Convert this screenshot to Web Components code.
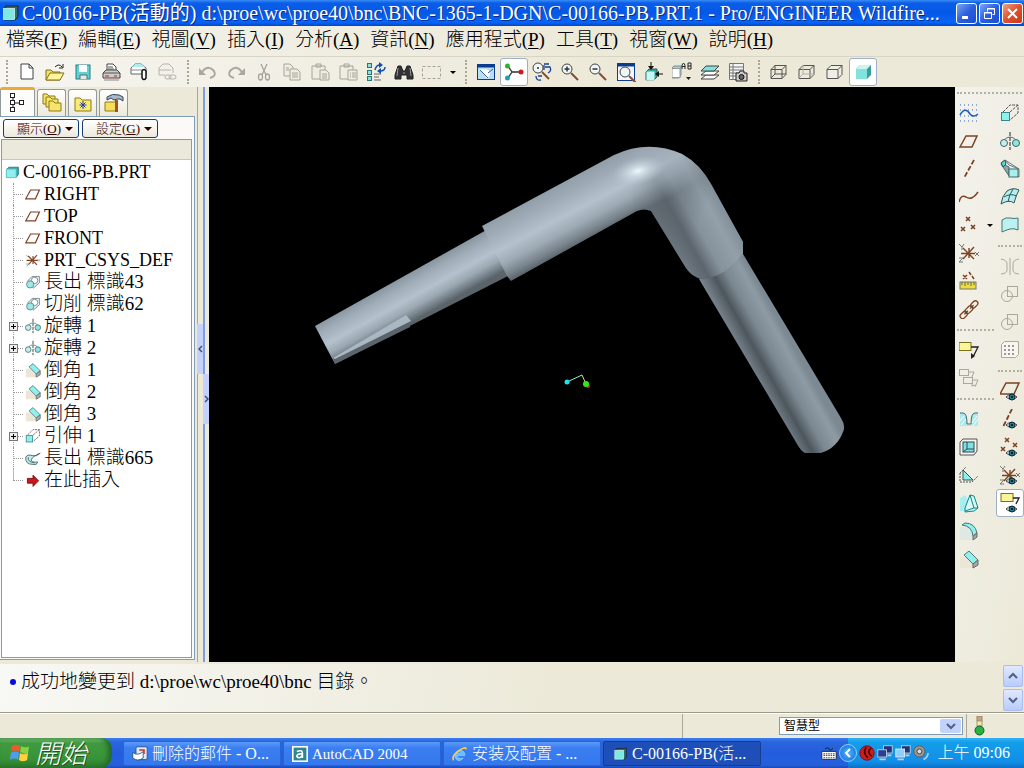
<!DOCTYPE html>
<html lang="zh-Hant">
<head>
<meta charset="utf-8">
<title>C-00166-PB(活動的) - Pro/ENGINEER Wildfire</title>
<style>
    body {
        margin: 0;
        font-family: "Liberation Serif", "Noto Sans CJK TC", serif;
        font-weight: 300;
        color: black;
    }
</style>
</head>
<body>
<proe-app></proe-app>

<script>
const BROWN = "#7b4324";
const AQUA = "#8ff0ee";
const EYE = `<path d="M6 16q5-5 11 0q-5 5-11 0z" fill="#fff" stroke="#345" /><circle cx="12" cy="16" r="3" fill="#1d7f84" stroke="#123"/><circle cx="12" cy="16" r="1" fill="#001"/>`;
const FOLDER = (x, y) => `<path d="M${x} ${y}h4l2 2h6v8h-12z" fill="#f6e46c" stroke="#8d7a18"/>`;
const LENS = (x, y) => `<path d="M${x + 4} ${y + 4}l7 7" stroke="#8b4a32" stroke-width="2"/><circle cx="${x}" cy="${y}" r="5" fill="#eef6f6" stroke="#444"/>`;
const CUBE = (fill, extra) => `<path d="M2 7.500l4-4h11v9l-4 4h-11zM2 7.500h11v9M13 7.500l4-4" fill="${fill}" stroke="#555"/>${extra}`;
const FLAG = `<rect x="0" y="2.500" width="12" height="8" fill="#fbf59a" stroke="#77701c"/>`;
const CSYS = `<path d="M4 5l11 11M15 4l-11 12M2 10.500h14M10 5v10" stroke="#7b4324" stroke-width="1.400"/>`;

// every drawing sits on a 20 x 20 grid
const ICONS = {
    app: `<path d="M4 6l2-3h12v11l-3 3H4z" fill="#2d6f70" stroke="#222"/><rect x="3.500" y="5.500" width="11" height="11" fill="#7fe8e2" stroke="#dff" stroke-width=".7"/>`,
    part: `<path d="M3 7l3-3h12v9l-3 4H3z" fill="#3ca7ab" stroke="#277"/><rect x="3" y="6.500" width="12" height="10.500" fill="${AQUA}" stroke="#6cc"/>`,
    new: `<path d="M4 2h8l4 4v11h-12zM12 2v4h4" fill="#fff" stroke="#444"/>`,
    open: `<path d="M1 8h5l2 2h7v8H1z" fill="#f5df62" stroke="#81701f"/><path d="M1 18l4-7h14l-4 7z" fill="#fff39b" stroke="#81701f"/><path d="M10 5q4-4 7 0M18 2v4h-4" stroke="#222"/>`,
    save: `<rect x="3" y="3" width="14" height="14" fill="#62cfd0" stroke="#287b80"/><rect x="6" y="3" width="8" height="7" fill="#fff"/><path d="M7 17v-4h7v4" fill="#e8e8e8" stroke="#477"/>`,
    print: `<path d="M6 9V2h6l3 3v4" fill="#fff" stroke="#444"/><path d="M2 11l3-3h11l3 3v5H2z" fill="#ccc" stroke="#444"/><path d="M2 11h17M7 5h5M7 7h6" stroke="#555"/><path d="M4 14h4M13 14h3" stroke="#c22"/><path d="M3 18h15" stroke="#888"/>`,
    mail: `<path d="M2 12V6l4-4h6l5 4v6z" fill="#fff" stroke="#666"/><path d="M2 8h12" stroke="#888"/><path d="M3 5l3-3h6l4 3z" fill="#aee"/><path d="M13 16V9q2-3 4 0v7q-2 3-4 0" fill="#fff" stroke="#111" stroke-width="1.500"/>`,
    link: `<g stroke="#b5b3a8"><path d="M2 13V6l4-4h6l4 4v5M2 8h12M2 13h6"/><rect x="8" y="13" width="6" height="4" rx="2"/><rect x="12" y="13" width="7" height="4" rx="2"/></g>`,
    undo: `<path d="M4 10q6-8 12-1q3 5-4 7" stroke="#aaa89c" stroke-width="2"/><path d="M1 6v7h7z" fill="#aaa89c"/>`,
    redo: `<path d="M16 10q-6-8-12-1q-3 5 4 7" stroke="#aaa89c" stroke-width="2"/><path d="M19 6v7h-7z" fill="#aaa89c"/>`,
    cut: `<g stroke="#a6a498" stroke-width="1.300"><path d="M7 2l5 11M13 2l-5 11"/><ellipse cx="6.500" cy="15" rx="2" ry="3"/><ellipse cx="13.500" cy="15" rx="2" ry="3"/></g>`,
    copy: `<g fill="#efede3" stroke="#a6a498"><path d="M2 2h6l3 3v9H2z"/><path d="M8 7h7l3 3v8H8zM10 11h6M10 13h6M10 15h6M4 6h3M4 8h3"/></g>`,
    paste: `<g fill="#efede3" stroke="#a6a498"><path d="M2 4h13v13H2zM6 2h5v3H6z"/><path d="M10 8h6l3 3v7h-9zM12 12h5M12 14h5M12 16h5"/></g>`,
    special: `<g fill="#efede3" stroke="#a6a498"><path d="M2 4h13v13H2zM6 2h5v3H6z"/><path d="M10 8h9v10h-9zM12 11h1M14 11h4M12 13h1M14 13h4M12 15h1M14 15h4"/></g>`,
    regen: `<g fill="#8edfd9" stroke="#287571"><rect x="1.500" y="1.500" width="4" height="4"/><rect x="1.500" y="8.500" width="4" height="4"/><rect x="1.500" y="14.500" width="4" height="4"/></g><path d="M8 12h7M8 15h5M8 18h7" stroke="#666"/><path d="M9 8q1-5 5-5M19 5q0 4-5 4" stroke="#134faa" stroke-width="1.500"/><path d="M13 0l4 3-4 3zM15 6l-4 3 4 3z" fill="#134faa"/>`,
    find: `<path d="M4 4h3l2 5h2l2-5h3l3 9v4h-6v-4H7v4H1v-4z" fill="#333" stroke="#222"/><path d="M4 6l-1 8M16 6l1 8M9 11h2" stroke="#999"/>`,
    select: `<rect x="0.500" y="4.500" width="18" height="12" stroke="#a6a498" stroke-dasharray="3 2"/>`,
    sketch: `<rect x="1.500" y="2.500" width="17" height="15" fill="#b9def5" stroke="#0c3c90"/><path d="M1 4h18" stroke="#0c3c90" stroke-width="3"/><path d="M3 8l3-1 7 1 1 5-3 4-3-5z" fill="#fff"/><path d="M4 8l8 8M12 11l5-4" stroke="#34608f"/>`,
    spin: `<path d="M4 4l4 6-4 6M8 10h9" stroke="#333" stroke-width="1.300"/><circle cx="3.500" cy="4" r="2.500" fill="#2cb52c"/><circle cx="3.500" cy="16" r="2.500" fill="#18a4a0"/><circle cx="17" cy="10" r="2.500" fill="#d01818"/>`,
    orient: `${LENS(6, 6)}<circle cx="6" cy="6" r="1" fill="#333"/><path d="M12 2h5M13 5h5q2 4-2 6M12 3v5M4 14q0 5 5 4M6 14h4" stroke="#1b3f94" stroke-width="1.300"/>`,
    zoomin: `${LENS(7, 7)}<path d="M4.500 7h5M7 4.500v5" stroke="#333" stroke-width="1.500"/>`,
    zoomout: `${LENS(7, 7)}<path d="M4.500 7h5" stroke="#333" stroke-width="1.500"/>`,
    refit: `<rect x="1.500" y="1.500" width="17" height="17" fill="#f4f8fc" stroke="#0c3c90"/><path d="M1 3h18" stroke="#0c3c90" stroke-width="3"/>${LENS(9, 10)}`,
    reorient: `<path d="M2 10l3-3h8v8l-3 3H2z" fill="#2ea9a6" stroke="#455"/><rect x="2.500" y="9.500" width="8" height="9" fill="#c8f6f2"/><path d="M7 0v7M19 12h-6" stroke="#111"/><path d="M4 4h6l-3 4zM15 9v6l-4-3z" fill="#111"/>`,
    views: `<path d="M0 6l2-2h7v9l-2 3H0z" fill="#8dd" stroke="#888"/><rect x="0" y="6.500" width="8" height="9" fill="#fff" stroke="#999"/><path d="M10 7V3l1.500-2L13 3v4M10 4.500h3M16 1v6h3V1h-3M16 4h3" stroke="#222"/><path d="M14 15h5l-2.500 3z" fill="#222"/>`,
    layers: `<g stroke="#444"><path d="M1 17l5-4h13l-5 4z" fill="#fff"/><path d="M1 13l5-4h13l-5 4z" fill="#fff"/><path d="M1 9l5-5h13l-5 5z" fill="#7de4df"/></g>`,
    viewmgr: `<path d="M1.500 1.500h14v16h-14zM1 5h14M1 8h14M1 11h14M1 14h14M5 1v16" fill="#f5f5f5" stroke="#777"/><path d="M8 11h3l1-2h4v2h3v8H8z" fill="#ccc" stroke="#222"/><circle cx="13.500" cy="15" r="2.500" fill="#666" stroke="#111"/>`,
    wire: CUBE("none", `<path d="M6 3v9h11M6 12l-4 4" stroke="#555"/>`),
    hidden: CUBE("none", `<path d="M6 3v9h11M6 12l-4 4" stroke="#b2b0a6"/>`),
    nohidden: CUBE("#f0eee4", ""),
    shaded: `<path d="M3 7l4-4h11v10l-4 4H3z" fill="#3a9d9b"/><path d="M3 7l4-4h11l-4 4z" fill="#c8f5ee"/><path d="M3 7h11v10H3z" fill="#84e2dc"/>`,

    tree: `<g stroke="#222" fill="#fff"><path d="M5 5v12M6 10h6"/><rect x="2.500" y="0.500" width="4" height="4"/><rect x="2.500" y="7.500" width="4" height="4"/><rect x="2.500" y="14.500" width="4" height="4"/><rect x="11.500" y="7.500" width="4" height="4"/></g>`,
    folders: FOLDER(1, 1) + FOLDER(4, 4) + FOLDER(7, 8),
    favorites: `<path d="M2 5h5l2 2h9v11H2z" fill="#f8ea74" stroke="#8d7a18"/><path d="M10 8v8M6.500 12h7M7.500 9.500l5 5M12.500 9.500l-5 5" stroke="#203cae"/>`,
    hammer: `<path d="M1 9h11v9H1z" fill="#f4df5c" stroke="#8d7a18"/><path d="M3 4q5-4 12-2l4 2v4l-3-2h-3l-3 1-3-2-4 2z" fill="#a8bbc6" stroke="#345"/><path d="M12.500 7v12" stroke="#a0561e" stroke-width="3"/>`,

    plane: `<path d="M1 16L7 5h11l-5 11z" stroke="${BROWN}" stroke-width="1.500"/>`,
    csysitem: `${CSYS}<path d="M1 4l3 2M16 9l3 3M19 9l-3 3M1 15h4l-3 3" stroke="#999"/>`,
    protrude: `<path d="M3 9l6-6h9v8l-8 7" fill="#e7f4f3" stroke="#678"/><circle cx="12" cy="8" r="4" fill="#fff" stroke="#678"/><circle cx="6.500" cy="13" r="4.500" fill="#9ce9e6" stroke="#577"/>`,
    revolve: `<path d="M10 1v18" stroke="#222" stroke-dasharray="4 1"/><path d="M4 9q3-3 6-3t6 3" stroke="#577"/><circle cx="4" cy="12" r="3.500" fill="#c3efec" stroke="#466"/><circle cx="16" cy="12" r="3.500" fill="#8ce5e2" stroke="#466"/>`,
    chamfer: `<path d="M1 8h7l6 6v5H1z" fill="#ece6d6"/><path d="M5 6l5-4 9 9-5 4z" fill="${AQUA}" stroke="#577"/><path d="M19 11v5l-5 3v-4z" fill="#aaa" stroke="#666"/>`,
    extrude: `<path d="M3 9l7-7h8v8l-8 7M10 9l8-7" stroke="#555" stroke-dasharray="3 1"/><rect x="1.500" y="9.500" width="8" height="8" fill="${AQUA}" stroke="#388"/>`,
    sweep: `<path d="M1 9q-1 9 9 9h4l2-3q-9 1-8-3q1-4 11-8q-5 5-10 3q-6-2-8 2z" fill="#c4eeec" stroke="#355"/><path d="M4 9q-1 6 8 7" stroke="#355"/>`,
    insert: `<path d="M3 8h7V4l7 7-7 7v-4H3z" fill="#d0141c" stroke="#6d0000"/>`,

    curve: `<path d="M1 2h18M1 18h18M1 7h18M1 13h18" stroke="#2c63b8" stroke-dasharray="1 3"/><path d="M1 12q5-9 10-1q3 4 8 0" stroke="#1558c0" stroke-width="1.500"/>`,
    axis: `<path d="M15 1L5 19" stroke="${BROWN}" stroke-width="1.800" stroke-dasharray="5 2"/>`,
    spline: `<path d="M0 15q2-8 7-5q6 4 12-5" stroke="${BROWN}" stroke-width="1.500"/>`,
    points: `<path d="M7 2l4 4m0-4l-4 4M2 12l4 4m0-4l-4 4M12 10l4 4m0-4l-4 4" stroke="${BROWN}" stroke-width="1.600"/>`,
    csys: `${CSYS}<path d="M0 1l3 3 2-3M3 4v3M16 9l4 4m0-4l-4 4M0 15h4l-4 4h4" stroke="#777"/>`,
    ruler: `<path d="M4 4l4 4m0-4l-4 4M10 1l2 3M13 5l2 3" stroke="${BROWN}" stroke-width="1.500"/><rect x="1" y="11" width="16" height="7" fill="#ecdf39" stroke="#777"/><path d="M3 11v3M6 11v4M9 11v3M12 11v4M15 11v3" stroke="#665"/>`,
    chain: `<g stroke="${BROWN}" stroke-width="1.300" transform="rotate(-45 10 10)"><rect x="-2" y="8" width="8" height="5" rx="2.500"/><rect x="5" y="8" width="9" height="5" rx="2.500"/><rect x="13" y="8" width="8" height="5" rx="2.500"/><path d="M3 10.500h5M11 10.500h5"/></g>`,
    note: `${FLAG}<path d="M12 7h7l-5 10" stroke="#222" stroke-width="1.300"/><path d="M12 13v6l4-3z" fill="#222"/>`,
    notes: `<g stroke="#aaa89c"><rect x="0.500" y="1.500" width="9" height="6"/><rect x="4.500" y="9.500" width="9" height="6"/><path d="M10 4h5l-2 5M14 12h5l-3 7M13 15v3l3-1"/></g>`,
    hole: `<path d="M1 4h3q4 0 4 12h4q0-12 4-12h3v13H1z" fill="#a9ecef"/><path d="M1 4h3q4 0 4 11h4q0-11 4-11h3" stroke="#466"/><path d="M1 12l4-5M2 16l5-6M13 14l5-7M14 17l5-7" stroke="#fff"/>`,
    shell: `<path d="M1 5l3-3h14v12l-3 4H1z" fill="#f5f5f0" stroke="#555"/><rect x="4" y="5" width="11" height="10" fill="#7ee4e2" stroke="#345"/><path d="M8 5v7h7M8 12l-4 3" stroke="#345"/>`,
    rib: `<path d="M1 8l6-6M1 17h12l6-6M1 8v9" stroke="#555" stroke-dasharray="2 1"/><path d="M4 5v10h10z" fill="${AQUA}" stroke="#355"/>`,
    draft: `<path d="M1 5l5-3 5 8v8H1z" fill="#a7eef0"/><path d="M6 15L11 2l4 1 4 12-4 3-9 1z" fill="#d5f9f6" stroke="#188"/><path d="M11 2l4 13-9 3M15 15l4 0" stroke="#188"/>`,
    round: `<path d="M1 6h7l6 7v6H1z" fill="#dfe9e4"/><path d="M3 4l3-2q10 0 12 10l-4 3Q13 5 3 4z" fill="${AQUA}" stroke="#477"/><path d="M18 12v4l-4 3v-4z" fill="#aaa" stroke="#666"/>`,

    blend: `<path d="M1 4l4-3 14 9v8z" fill="#d9f5f4" stroke="#777"/><path d="M5 1l4 5 10 4" stroke="#777"/><path d="M1 5l8 12V8L5 6z" fill="#8aa" stroke="#566"/><rect x="9" y="10" width="9" height="8" fill="#a6f0ee" stroke="#466"/><path d="M1 4l4-3 1 4-3 3z" fill="#59d6d4" stroke="#355"/>`,
    boundary: `<path d="M7 4q6-4 12-1q-3 5-5 13q-5-4-13 1q1-8 6-13z" fill="#b4f0f1" stroke="#355"/><path d="M4 10q6-4 13-1M13 2q-4 6-5 13" stroke="#355"/>`,
    style: `<path d="M2 5q4-3 8-2t8 0v12q-4-2-8-1t-8 3z" fill="#bdf0f1" stroke="#477"/>`,
    mirror: `<path d="M10 2v17M1 3q6 1 6 5v7q-1 3-6 3M19 3q-6 1-6 5v7q1 3 6 3" stroke="#aaa89c"/>`,
    merge: `<g stroke="#aaa89c"><rect x="7.500" y="2.500" width="10" height="10"/><circle cx="7" cy="12" r="5.500"/></g>`,
    pattern: `<path d="M1.500 4.500l3-3h14v13l-3 3h-14z" fill="#f7f6ef" stroke="#aaa89c"/><path d="M4 6h10M4 10h10M4 14h10" stroke="#999" stroke-width="2" stroke-dasharray="2 2"/>`,
    showplane: `<path d="M0 13L6 2h13l-5 11z" stroke="${BROWN}" stroke-width="1.500"/>${EYE}`,
    showaxis: `<path d="M12 0L3 18" stroke="${BROWN}" stroke-width="1.800" stroke-dasharray="5 2"/>${EYE}`,
    showpoints: `<path d="M5 1l4 4m0-4L5 5M1 10l4 4m0-4l-4 4M13 6l4 4m0-4l-4 4" stroke="${BROWN}" stroke-width="1.500"/>${EYE}`,
    showcsys: `${CSYS}<path d="M0 1l3 3 2-3M3 4v3M16 8l4 4m0-4l-4 4M0 15h4l-4 4h4" stroke="#777"/>${EYE}`,
    shownote: `<g transform="translate(1 -2)">${FLAG}<path d="M12 7h6l-3 6" stroke="#222" stroke-width="1.300"/></g>${EYE}`,

    semaphore: `<rect x="8" y="0" width="5" height="5" fill="#c9a27e" stroke="#986"/><rect x="8" y="5" width="5" height="5" fill="#f5e9a4" stroke="#a98"/><circle cx="10.500" cy="14.500" r="4.500" fill="#2bb040" stroke="#063"/>`,
    windows: `<g transform="rotate(8 10 10)"><path d="M1 4q4-3 8-1v6q-4-2-8 1z" fill="#f0592a"/><path d="M10 3q4 2 8-1v7q-4 2-8 0z" fill="#8bd045"/><path d="M1 11q4-3 8-1v7q-4-2-8 1z" fill="#4c9df2"/><path d="M10 10q4 2 8-1v7q-4 3-8 1z" fill="#ffd23e"/></g>`,
    outlook: `<rect x="5" y="1" width="14" height="16" rx="2" fill="#dce9f8" stroke="#246"/><path d="M1 8q6 5 13-1v8q-7 5-13 0z" fill="#fff" stroke="#247"/><path d="M9 5h6v5" stroke="#c33" stroke-width="2"/>`,
    acad: `<rect x="1" y="1" width="18" height="18" fill="#2f8590" stroke="#fff" stroke-width="2"/><path d="M6 7q7-3 7 2v6M13 10q-7-1-7 3q3 4 7-1" stroke="#fff" stroke-width="2"/>`,
    ie: `<path d="M15 12H6q1 5 8 3q-2 4-7 3q-5-3-3-8q3-6 9-4q4 2 3 6zM6 9h6q-2-4-6 0" fill="#68bef8" stroke="#8cf" fill-rule="evenodd"/><path d="M2 18Q-1 13 8 6q9-6 10-2" stroke="#ffcf3f" stroke-width="2"/>`,
    keyboard: `<rect x="1" y="8" width="18" height="10" rx="1" fill="#fff" stroke="#111"/><path d="M3 11h14M3 13h14M3 16h14" stroke="#111" stroke-dasharray="2 1"/><path d="M5 5q4-3 5 0t5-1" stroke="#111"/>`,
    avira: `<circle cx="10" cy="10" r="9" fill="#d01c1c" stroke="#700"/><path d="M9 3q-5 6 2 13M15 4q-6 5 1 10" stroke="#400" stroke-width="2"/>`,
    network: `<rect x="8" y="1" width="11" height="9" fill="#20337a" stroke="#cdd"/><rect x="1" y="6" width="11" height="9" fill="#2a3e96" stroke="#cdd"/><path d="M3 18h8M13 13h5" stroke="#ccc" stroke-width="2"/>`,
    network2: `<rect x="8" y="1" width="11" height="9" fill="#20337a" stroke="#cdd"/><rect x="1" y="5" width="11" height="10" fill="#8bcfff" stroke="#eef"/><path d="M3 18h8M13 13h5" stroke="#ccc" stroke-width="2"/>`,
    volume: `<circle cx="8" cy="8" r="7" fill="#9a958c" stroke="#555"/><circle cx="8" cy="8" r="3" fill="#ddd" stroke="#333"/><path d="M13 18q5-2 6-8" stroke="#bcd" stroke-width="2"/>`
};

class UiElement extends HTMLElement {
    constructor() {
        super();
        this.shadow = this.attachShadow({mode: "open"});
    }

    connectedCallback() {
        this.shadow.innerHTML = `<style>* { box-sizing: border-box; } button, select { font: inherit; } ${this.styles()}</style>${this.markup()}`;
    }
}

class UiIcon extends UiElement {
    styles() {
        return `:host { display: block; flex: none; width: 20px; height: 20px; }
            svg { display: block; width: 100%; height: 100%; }`;
    }

    markup() {
        return `<svg viewBox="0 0 20 20" fill="none" aria-hidden="true">${ICONS[this.getAttribute("name")]}</svg>`;
    }
}

class ToolButton extends UiElement {
    styles() {
        return `:host { display: flex; flex: none; align-items: center; height: 28px; }
            button {
                display: grid;
                place-items: center;
                width: 28px;
                height: 28px;
                padding: 0;
                border: 1px solid transparent;
                border-radius: 3px;
                background: none;
            }
            :host([active]) button { background: white; border-color: #9db0c4; }
            .more { width: 13px; }
            .more::before { content: ""; border: 3px solid transparent; border-top-color: black; border-bottom: 0; }`;
    }

    markup() {
        const icon = this.getAttribute("icon");
        const more = this.hasAttribute("more") ? `<button class="more" aria-label="${icon} menu"></button>` : "";
        return `<button aria-label="${icon}"><ui-icon name="${icon}"></ui-icon></button>${more}`;
    }
}

const tools = (names, active) => names.split(" ").map(n => {
    const more = n.endsWith("+") ? " more" : "";
    n = n.replace("+", "");
    return `<tool-button icon="${n}"${more}${n === active ? " active" : ""}></tool-button>`;
}).join("");

class TitleBar extends UiElement {
    styles() {
        return `:host {
                display: flex;
                align-items: center;
                gap: 2px;
                height: 26px;
                padding: 0 1px 0 0;
                background: linear-gradient(#3b8cf6, #0a5de8 12%, #0558e6 50%, #0565fb 85%, #0346c8);
                color: white;
            }
            h1 {
                flex: 1;
                min-width: 0;
                margin: 0;
                overflow: hidden;
                white-space: nowrap;
                font-size: 20px;
                line-height: 24px;
                font-weight: 400;
                text-shadow: 1px 1px #0b2a86;
            }
            button {
                display: grid;
                place-items: center;
                width: 21px;
                height: 21px;
                padding: 0;
                border: 1px solid white;
                border-radius: 3px;
                background: linear-gradient(135deg, #7da5f5, #2a5fe0 50%, #1c4bd0);
            }
            .close { background: linear-gradient(135deg, #f0a085, #e0502c 50%, #c63a14); }
            svg { width: 15px; height: 15px; }`;
    }

    markup() {
        const btn = (label, d, w, cls = "") => `<button aria-label="${label}" class="${cls}"><svg viewBox="0 0 15 15" fill="none" stroke="white" stroke-width="${w}"><path d="${d}"/></svg></button>`;
        return `<ui-icon name="app"></ui-icon>
            <h1>C-00166-PB(活動的) d:\\proe\\wc\\proe40\\bnc\\BNC-1365-1-DGN\\C-00166-PB.PRT.1 - Pro/ENGINEER Wildfire...</h1>
            ${btn("minimize", "M3 11.500h6", 3)}
            ${btn("restore", "M5.500 5.500v-3h7v6h-2M2.500 6.500h7v6h-7zM5 3h8M2 7h8", 1)}
            ${btn("close", "M3 3l9 9M12 3l-9 9", 2, "close")}`;
    }
}

class MenuBar extends UiElement {
    styles() {
        return `:host { display: block; background: linear-gradient(100deg, #f4f3ec, #ece9d8 60%); border-bottom: 1px solid #d8d5c6; }
            nav { display: flex; gap: 11px; height: 30px; padding: 0 6px 2px; align-items: center; }
            button { padding: 0; border: 0; background: none; color: black; font-size: 19px; line-height: 26px; white-space: nowrap; }
            u { text-underline-offset: 2px; text-decoration-thickness: 1px; }`;
    }

    markup() {
        const items = ["檔案F", "編輯E", "視圖V", "插入I", "分析A", "資訊N", "應用程式P", "工具T", "視窗W", "說明H"];
        return `<nav>${items.map(i => `<button>${i.slice(0, -1)}(<u>${i.slice(-1)}</u>)</button>`).join("")}</nav>`;
    }
}

class ToolBar extends UiElement {
    styles() {
        return `:host { display: flex; height: 30px; align-items: center; background: linear-gradient(100deg, #f6f5f0, #ece9d8 60%); }
            i { flex: none; width: 13px; height: 24px; display: grid; justify-content: center; }
            i::before { content: ""; border-left: 2px dotted #aaa798; }`;
    }

    markup() {
        return `<i></i>${tools("new open save print mail link")}
            <i></i>${tools("undo redo cut copy paste special regen find select+")}
            <i></i>${tools("sketch spin orient zoomin zoomout refit reorient views layers viewmgr", "spin")}
            <i></i>${tools("wire hidden nohidden shaded", "shaded")}`;
    }
}

class TreeItem extends UiElement {
    styles() {
        return `:host { display: flex; align-items: center; height: 22px; padding-left: 11px; font-size: 19px; line-height: 22px; white-space: nowrap; }
            :host([latin]) { font-size: 18px; }
            :host([root]) { padding-left: 2px; }
            ui-icon { width: 16px; height: 16px; margin-right: 3px; }
            /* dotted guide, with the +/- box on top of it */
            .guide { flex: none; width: 10px; height: 22px; margin-right: 2px; border-left: 1px dotted #999; display: grid; align-items: center; }
            .guide::before { content: ""; border-top: 1px dotted #999; grid-area: 1 / 1; }
            :host([last]) .guide { border: 0; background: linear-gradient(90deg, #bbb 1px, transparent 1px) 0 0 / 1px 11px no-repeat; }
            button {
                grid-area: 1 / 1;
                position: relative;
                left: -5px;
                width: 9px;
                height: 9px;
                padding: 0;
                border: 1px solid #777;
                background: linear-gradient(black, black) center / 5px 1px no-repeat, linear-gradient(black, black) center / 1px 5px no-repeat, #eee;
            }`;
    }

    markup() {
        const plus = this.hasAttribute("more") ? `<button aria-label="expand"></button>` : "";
        const guide = this.hasAttribute("root") ? "" : `<span class="guide">${plus}</span>`;
        return `${guide}<ui-icon name="${this.getAttribute("icon")}"></ui-icon><span><slot></slot></span>`;
    }
}

class ModelNavigator extends UiElement {
    styles() {
        return `:host { display: flex; flex-direction: column; min-height: 0; padding-bottom: 2px; background: #ece9d8; }
            .tabs { display: flex; flex: none; gap: 2px; height: 29px; align-items: flex-end; }
            .tabs button {
                display: grid;
                place-items: center;
                width: 29px;
                height: 27px;
                padding: 0;
                border: 1px solid #919b9c;
                border-bottom: 0;
                border-radius: 3px 3px 0 0;
                background: linear-gradient(white, #eceada);
            }
            .tabs .on { width: 35px; height: 29px; background: #fcfcfa; border-top: 3px solid #f0a830; }
            .panel { display: flex; flex: 1; flex-direction: column; min-height: 0; padding: 2px 2px 1px 1px; border: 1px solid #7f9db9; border-left: 0; background: #fbfaf6; }
            .actions { display: flex; flex: none; gap: 3px; height: 20px; padding: 0 2px 1px; }
            .actions button {
                display: flex;
                align-items: center;
                justify-content: flex-end;
                gap: 4px;
                width: 76px;
                padding: 0 5px 0 0;
                border: 1px solid #123c74;
                border-radius: 3px;
                background: linear-gradient(white, #ece9dc);
                color: #300;
                font-size: 13px;
                line-height: 16px;
                white-space: nowrap;
            }
            .actions button::after { content: ""; border: 4px solid transparent; border-top-color: #300; border-bottom: 0; }
            .box { display: flex; flex: 1; flex-direction: column; min-height: 0; border: 1px solid #7f9db9; background: white; }
            .head { flex: none; height: 20px; margin-bottom: 1px; background: #ebe9db; border-bottom: 1px solid #cbc7b8; }`;
    }

    markup() {
        return `<div class="tabs">
                <button class="on" aria-label="model tree"><ui-icon name="tree"></ui-icon></button>
                <button aria-label="folders"><ui-icon name="folders"></ui-icon></button>
                <button aria-label="favorites"><ui-icon name="favorites"></ui-icon></button>
                <button aria-label="connections"><ui-icon name="hammer"></ui-icon></button>
            </div>
            <div class="panel">
                <div class="actions"><button><span>顯示(<u>O</u>)</span></button><button><span>設定(<u>G</u>)</span></button></div>
                <div class="box"><div class="head"></div><slot></slot></div>
            </div>`;
    }
}

class PanelSash extends UiElement {
    styles() {
        return `:host { display: flex; padding-left: 2px; background: #ece9d8; }
            div { width: 6px; background: linear-gradient(90deg, #8ba6e0 1px, transparent 1px); }
            div + div { background: linear-gradient(90deg, #7f9de0 2px, transparent 2px); }
            button { width: 6px; height: 50px; padding: 0; border: 0; background: #c3d1fb; display: grid; place-items: center; }
            svg { width: 5px; height: 8px; }
            .a { margin-top: 237px; }
            .b { margin-top: 287px; }`;
    }

    markup() {
        const arrow = d => `<svg viewBox="0 0 5 8" fill="none" stroke="#3b4f80" stroke-width="1.500"><path d="${d}"/></svg>`;
        return `<div><button class="a" aria-label="collapse">${arrow("M4 1L1 4l3 3")}</button></div>
            <div><button class="b" aria-label="expand">${arrow("M1 1l3 3-3 3")}</button></div>`;
    }
}

class ModelView extends UiElement {
    styles() {
        return `:host { display: block; min-width: 0; min-height: 0; background: black; overflow: hidden; contain: size; }
            svg { display: block; width: 100%; height: 100%; }`;
    }

    markup() {
        return `<svg viewBox="209 87 746 575" role="img" aria-label="bent pin">
            <defs>
                <linearGradient id="sleeve" gradientUnits="userSpaceOnUse" x1="482" y1="226" x2="511" y2="281">
                    <stop offset="0" stop-color="#929fa9"/><stop offset=".18" stop-color="#9eabb6"/><stop offset=".48" stop-color="#b5c2cd"/>
                    <stop offset=".7" stop-color="#9da9b3"/><stop offset=".88" stop-color="#78838c"/><stop offset="1" stop-color="#596269"/>
                </linearGradient>
                <linearGradient id="rod" gradientUnits="userSpaceOnUse" x1="315" y1="326" x2="336" y2="364">
                    <stop offset="0" stop-color="#8b98a2"/><stop offset=".2" stop-color="#a0adb8"/><stop offset=".5" stop-color="#b5c2cd"/>
                    <stop offset=".72" stop-color="#9ba8b2"/><stop offset="1" stop-color="#5a636a"/>
                </linearGradient>
                <linearGradient id="arm" gradientUnits="userSpaceOnUse" x1="683" y1="268" x2="740" y2="236">
                    <stop offset="0" stop-color="#727d85"/><stop offset=".14" stop-color="#667078"/><stop offset=".28" stop-color="#5c656d"/>
                    <stop offset=".5" stop-color="#85919b"/><stop offset=".8" stop-color="#93a0aa"/><stop offset="1" stop-color="#828e98"/>
                </linearGradient>
                <linearGradient id="leg" gradientUnits="userSpaceOnUse" x1="699" y1="279" x2="742" y2="255">
                    <stop offset="0" stop-color="#7a858e"/><stop offset=".14" stop-color="#667078"/><stop offset=".3" stop-color="#4d565d"/>
                    <stop offset=".55" stop-color="#7c8891"/><stop offset=".85" stop-color="#8e9ba5"/><stop offset="1" stop-color="#7c8892"/>
                </linearGradient>
                <linearGradient id="fade" gradientUnits="userSpaceOnUse" x1="632" y1="185" x2="704" y2="212">
                    <stop offset="0" stop-color="black"/><stop offset="1" stop-color="white"/>
                </linearGradient>
                <mask id="turn" maskUnits="userSpaceOnUse" x="209" y="87" width="746" height="575"><rect x="209" y="87" width="746" height="575" fill="url(#fade)"/></mask>
                <radialGradient id="shine"><stop offset="0" stop-color="#f2f9fe"/><stop offset=".3" stop-color="#dce7ef" stop-opacity=".7"/><stop offset="1" stop-color="#bac7d2" stop-opacity="0"/></radialGradient>
            </defs>
            <path d="M699 279L730 245L743 254L841 418Q846 426 843 432Q837 448 821 453H805Q801 451 797 444Z" fill="url(#leg)"/>
            <path d="M315 326L490 228L520 270L335 364Z" fill="url(#rod)"/>
            <path d="M482 226L614 155Q648 139 682 154Q700 164 711 184L743 242V254Q728 276 702 279Q692 277 686 268L651 211Q644 208 637 211L511 281L507 276L486 234Z" fill="url(#sleeve)"/>
            <path d="M614 155Q648 139 682 154Q700 164 711 184L743 242V254Q728 276 702 279Q692 277 686 268L651 211Q644 208 637 211Z" fill="url(#arm)" mask="url(#turn)"/>
            <ellipse cx="638" cy="171" rx="28" ry="14" transform="rotate(-14 638 171)" fill="url(#shine)"/>
            <path d="M333 358L410 319V327L335 364Z" fill="#5b646b"/>
            <path d="M333 358L406 315L411 321L335 359Z" fill="#aab8c3"/>
            <path d="M567 382L582 375" stroke="#8af0e6"/><path d="M582 375L586 384" stroke="#d8e878"/>
            <circle cx="588" cy="386" r="2" fill="#d22"/><circle cx="567" cy="382" r="2.500" fill="#19e6ee"/><circle cx="586" cy="384" r="3" fill="#2bea1c"/>
        </svg>`;
    }
}

class FeatureTools extends UiElement {
    styles() {
        return `:host { display: grid; grid-template-columns: 41px 28px; align-content: start; background: linear-gradient(100deg, #f3f2ec, #ece9d8); }
            i { display: flex; height: 13px; align-items: center; padding: 0 2px; }
            i::before { content: ""; flex: 1; border-top: 2px dotted #b3b0a3; }
            .wide { grid-column: 1 / -1; height: 12px; }`;
    }

    markup() {
        return `<i class="wide"></i>
            <div>${tools("curve plane axis spline points+ csys ruler chain")}<i></i>${tools("note notes")}<i></i>${tools("hole shell rib draft round chamfer")}</div>
            <div>${tools("extrude revolve blend boundary style")}<i></i>${tools("mirror merge merge pattern")}<i></i>${tools("showplane showaxis showpoints showcsys shownote", "shownote")}</div>`;
    }
}

class MessageArea extends UiElement {
    styles() {
        return `:host {
                display: flex;
                justify-content: space-between;
                height: 51px;
                padding: 4px 1px 0 10px;
                border-top: 2px solid #ece9d8;
                border-bottom: 1px solid #9c9a8c;
                background: linear-gradient(105deg, #f8f8f5, #ece9d8 55%);
                box-sizing: border-box;
                font-size: 19px;
                line-height: 28px;
            }
            ul { margin: 0; padding: 0; list-style: none; }
            li { display: flex; align-items: center; gap: 5px; }
            li::before { content: ""; width: 6px; height: 6px; border-radius: 3px; background: #0a0ae0; }
            div { display: grid; align-content: start; gap: 2px; margin-top: -3px; }
            button { display: grid; place-items: center; width: 20px; height: 22px; padding: 0; border: 1px solid #a9bdf0; border-radius: 2px; background: linear-gradient(#e0e9ff, #b9ccf8); }
            svg { width: 10px; height: 8px; }`;
    }

    markup() {
        const arrow = (label, d) => `<button aria-label="${label}"><svg viewBox="0 0 10 8" fill="none" stroke="#4d6185" stroke-width="2"><path d="${d}"/></svg></button>`;
        return `<ul><li><slot></slot></li></ul><div>${arrow("up", "M1 6l4-4 4 4")}${arrow("down", "M1 2l4 4 4-4")}</div>`;
    }
}

class StatusBar extends UiElement {
    styles() {
        return `:host { display: flex; justify-content: flex-end; height: 25px; box-sizing: border-box; background: #ece9d8; border-top: 1px solid white; }
            .cell { display: flex; align-items: center; border-left: 1px solid #aca899; }
            .filter { width: 284px; justify-content: flex-end; padding-right: 3px; }
            .light { width: 58px; padding-left: 2px; }
            label { display: flex; align-items: center; width: 184px; height: 18px; border: 1px solid #7f9db9; background: white; }
            select { flex: 1; width: 100%; height: 16px; padding: 0 4px; border: 0; appearance: none; background: none; color: black; font-size: 12px; line-height: 16px; font-weight: 400; }
            svg { flex: none; width: 21px; height: 14px; margin: 1px; background: #c2d2fb; border-radius: 2px; }`;
    }

    markup() {
        return `<div class="cell filter"><label><select aria-label="filter"><option>智慧型</option></select>
                <svg viewBox="0 0 21 14" fill="none" stroke="#4d6185" stroke-width="2"><path d="M7 5l4 4 4-4"/></svg></label></div>
            <div class="cell light"><ui-icon name="semaphore"></ui-icon></div>`;
    }
}

class TaskButton extends UiElement {
    styles() {
        return `:host { display: block; flex: 0 1 158px; min-width: 0; height: 25px; }
            button {
                display: flex;
                align-items: center;
                gap: 4px;
                width: 100%;
                height: 25px;
                padding: 0 8px;
                border: 1px solid #2b62d4;
                border-radius: 2px;
                background: linear-gradient(#5d9bf8, #3b7ff2 25%, #3577ec);
                color: white;
                font-size: 16px;
                line-height: 22px;
                white-space: nowrap;
                overflow: hidden;
            }
            :host([latin]) button { font-size: 15px; }
            :host([active]) button { background: #1e4fb8; border-color: #163c95; }
            ui-icon { width: 16px; height: 16px; }`;
    }

    markup() {
        return `<button><ui-icon name="${this.getAttribute("icon")}"></ui-icon><slot></slot></button>`;
    }
}

class TaskBar extends UiElement {
    styles() {
        return `:host { display: flex; height: 30px; background: linear-gradient(#3a80f0, #2a66de 12%, #245ddb 50%, #2560dc 90%, #1c48b4); color: white; }
            .start {
                display: flex;
                flex: none;
                align-items: center;
                gap: 5px;
                width: 112px;
                padding: 0 0 0 10px;
                border: 0;
                border-radius: 0 10px 12px 0;
                background: linear-gradient(#7cc578, #3f9a40 18%, #389338 70%, #2b7a2c);
                box-shadow: inset -4px 0 5px #23692c;
                color: white;
                font-size: 26px;
                line-height: 28px;
                font-style: italic;
                text-shadow: 1px 1px #1d5220;
            }
            .start span { padding-top: 3px; }
            .tasks { display: flex; flex: 1; gap: 2px; min-width: 0; padding: 3px 0 0 11px; }
            .lang { flex: none; display: flex; align-items: center; width: 29px; padding-left: 2px; }
            .tray { display: flex; flex: none; align-items: center; gap: 2px; width: 176px; padding-right: 14px; background: linear-gradient(#31b1f7, #139ee9 15%, #118ee8 80%, #0d6fc4); }
            .tray button { display: grid; place-items: center; flex: none; width: 18px; height: 18px; margin-left: -9px; padding: 0; border: 1px solid #8fd0ff; border-radius: 9px; background: radial-gradient(#4cb4ff, #1268d8); }
            .tray svg { width: 8px; height: 10px; }
            ui-icon { width: 16px; height: 16px; }
            .start ui-icon { width: 20px; height: 20px; }
            time { margin-left: auto; font-size: 16px; line-height: 22px; white-space: nowrap; }`;
    }

    markup() {
        return `<button class="start"><ui-icon name="windows"></ui-icon><span>開始</span></button>
            <div class="tasks"><slot></slot></div>
            <div class="lang"><ui-icon name="keyboard"></ui-icon></div>
            <div class="tray">
                <button aria-label="show icons"><svg viewBox="0 0 8 10" fill="none" stroke="white" stroke-width="2"><path d="M6 1L2 5l4 4"/></svg></button>
                <ui-icon name="avira"></ui-icon><ui-icon name="network"></ui-icon><ui-icon name="network2"></ui-icon><ui-icon name="volume"></ui-icon>
                <time>上午 09:06</time>
            </div>`;
    }
}

class ProeApp extends UiElement {
    styles() {
        return `:host { display: grid; grid-template-rows: auto auto auto minmax(500px, 1fr) auto auto auto; min-height: 100vh; }
            main { display: grid; grid-template-columns: 195px 14px minmax(0, 1fr) 69px; min-height: 0; }`;
    }

    markup() {
        return `<title-bar></title-bar>
            <menu-bar></menu-bar>
            <tool-bar></tool-bar>
            <main>
                <model-navigator>
                    <tree-item icon="part" root latin>C-00166-PB.PRT</tree-item>
                    <tree-item icon="plane" latin>RIGHT</tree-item>
                    <tree-item icon="plane" latin>TOP</tree-item>
                    <tree-item icon="plane" latin>FRONT</tree-item>
                    <tree-item icon="csysitem" latin>PRT_CSYS_DEF</tree-item>
                    <tree-item icon="protrude">長出 標識43</tree-item>
                    <tree-item icon="protrude">切削 標識62</tree-item>
                    <tree-item icon="revolve" more>旋轉 1</tree-item>
                    <tree-item icon="revolve" more>旋轉 2</tree-item>
                    <tree-item icon="chamfer">倒角 1</tree-item>
                    <tree-item icon="chamfer">倒角 2</tree-item>
                    <tree-item icon="chamfer">倒角 3</tree-item>
                    <tree-item icon="extrude" more>引伸 1</tree-item>
                    <tree-item icon="sweep">長出 標識665</tree-item>
                    <tree-item icon="insert" last>在此插入</tree-item>
                </model-navigator>
                <panel-sash></panel-sash>
                <model-view></model-view>
                <feature-tools></feature-tools>
            </main>
            <message-area>成功地變更到 d:\\proe\\wc\\proe40\\bnc 目錄。</message-area>
            <status-bar></status-bar>
            <task-bar>
                <task-button icon="outlook">刪除的郵件 - O...</task-button>
                <task-button icon="acad" latin>AutoCAD 2004</task-button>
                <task-button icon="ie">安装及配置 - ...</task-button>
                <task-button icon="app" active>C-00166-PB(活...</task-button>
            </task-bar>`;
    }
}

customElements.define("ui-icon", UiIcon);
customElements.define("tool-button", ToolButton);
customElements.define("title-bar", TitleBar);
customElements.define("menu-bar", MenuBar);
customElements.define("tool-bar", ToolBar);
customElements.define("tree-item", TreeItem);
customElements.define("model-navigator", ModelNavigator);
customElements.define("panel-sash", PanelSash);
customElements.define("model-view", ModelView);
customElements.define("feature-tools", FeatureTools);
customElements.define("message-area", MessageArea);
customElements.define("status-bar", StatusBar);
customElements.define("task-button", TaskButton);
customElements.define("task-bar", TaskBar);
customElements.define("proe-app", ProeApp);
</script>
</body>
</html>
